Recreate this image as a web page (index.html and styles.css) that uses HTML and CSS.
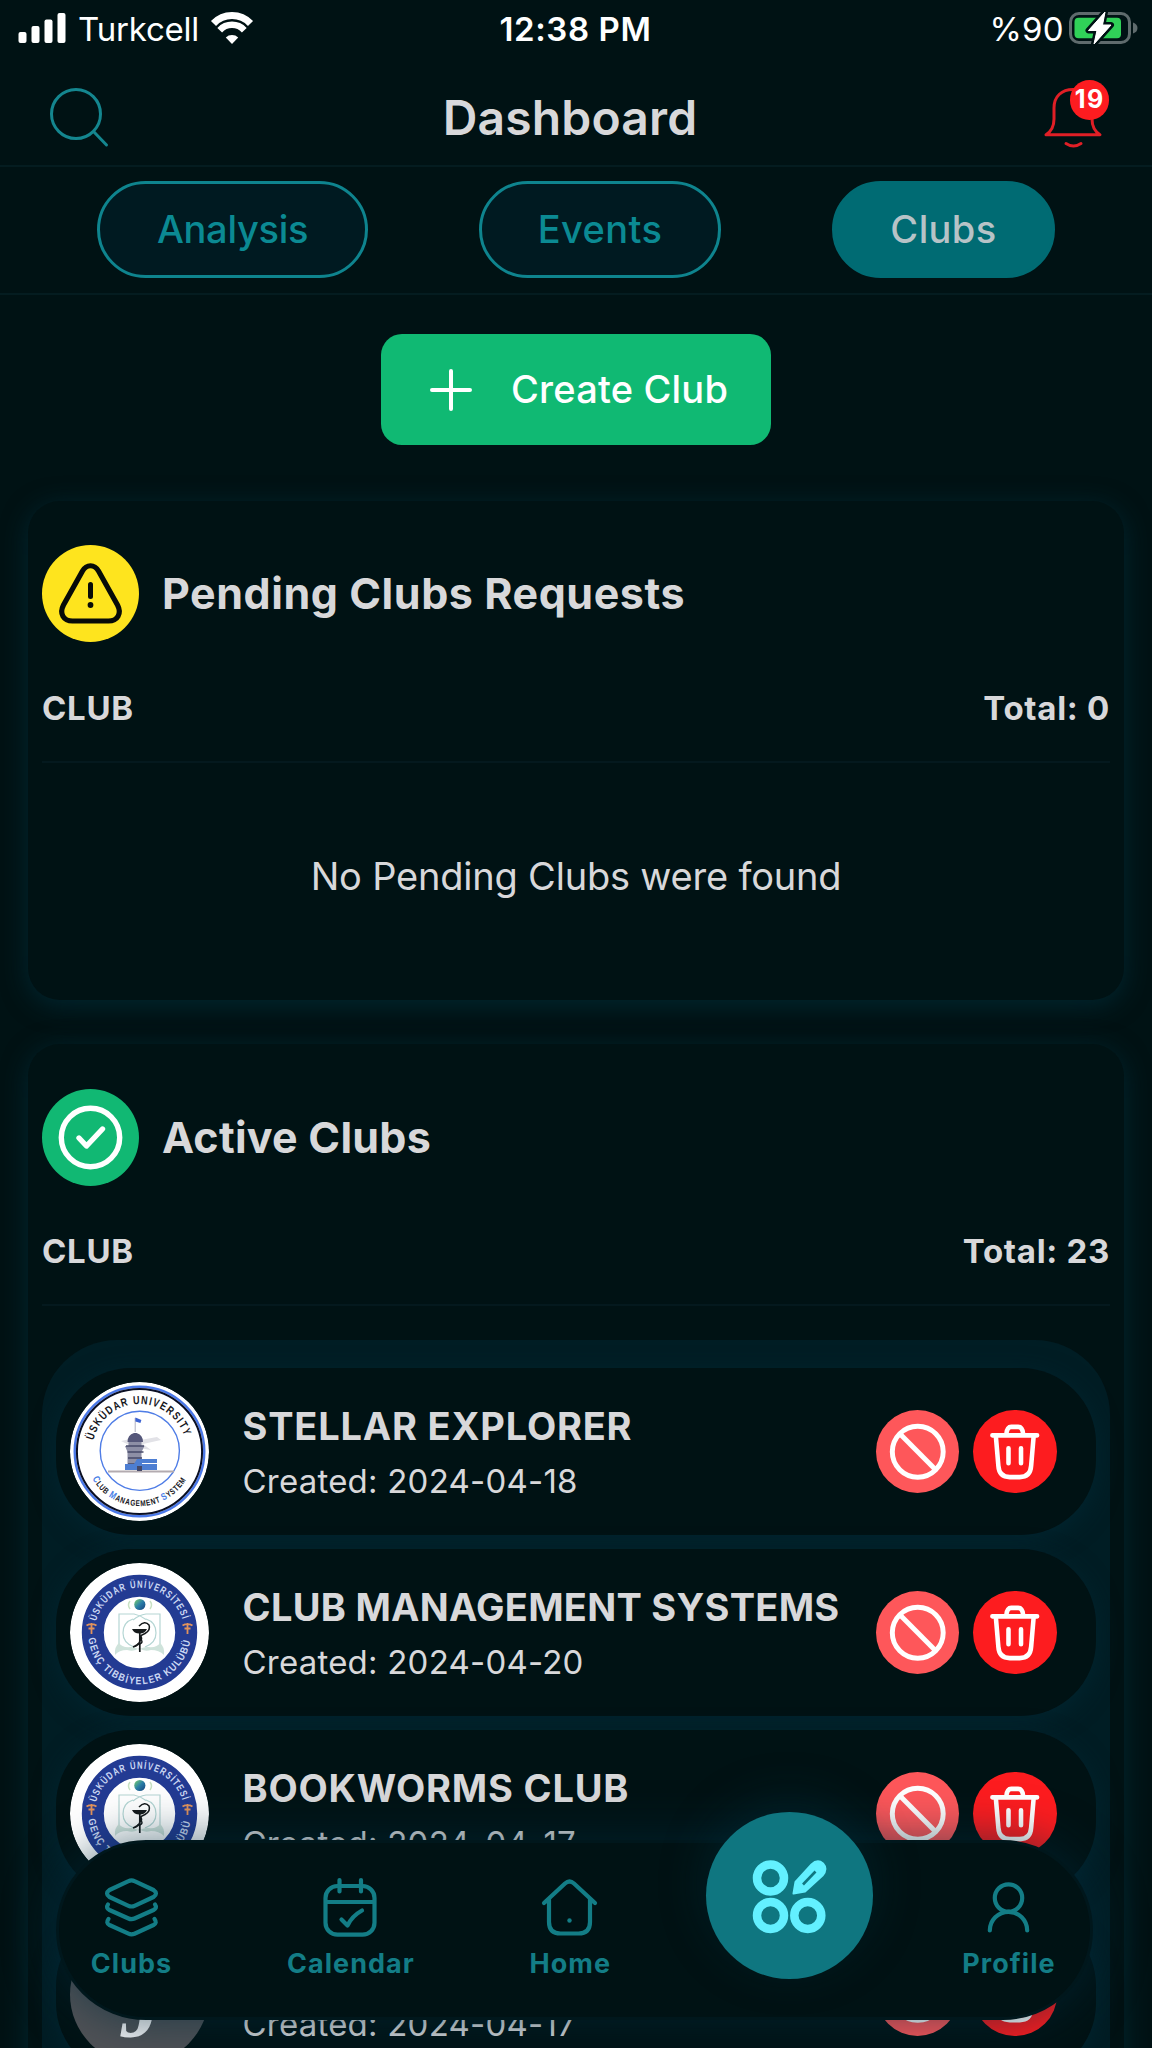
FILE: index.html
```html
<!DOCTYPE html>
<html lang="en">
<head>
<meta charset="utf-8">
<title>Dashboard</title>
<link rel="stylesheet" href="styles.css">
</head>
<body>
<svg class="defs" width="0" height="0" aria-hidden="true">
  <defs>
    <path id="arc-a-top" d="M23.3 58.4A47.5 47.5 0 0 1 114.4 54"/>
    <path id="arc-a-bottom" d="M22.3 96.8A54.5 54.5 0 0 0 116.7 96.8"/>
    <path id="arc-b-top" d="M26.2 58.3A44.7 44.7 0 0 1 112.8 58.3"/>
    <path id="arc-b-bottom" d="M18.3 75.3A51.5 51.5 0 0 0 120.7 75.3"/>
    <linearGradient id="globe" x1="0" y1="0" x2="1" y2="1"><stop offset="0" stop-color="#7fd36b"/><stop offset=".5" stop-color="#2a7fa8"/><stop offset="1" stop-color="#173f7c"/></linearGradient>
    <symbol id="seal-a" viewBox="0 0 139 139">
      <circle cx="69.5" cy="69.5" r="69.5" fill="#fff"/>
      <circle cx="69.5" cy="69.5" r="64.8" fill="none" stroke="#4a78e8" stroke-width="2.4"/>
      <circle cx="69.5" cy="69.5" r="62.6" fill="none" stroke="#0a0f24" stroke-width="2"/>
      <circle cx="69.8" cy="68.8" r="39.6" fill="none" stroke="#4f7de6" stroke-width="1.4"/>
      <g class="seal-a-text">
        <text font-size="11.5" letter-spacing="1.6"><textPath href="#arc-a-top" textLength="123" lengthAdjust="spacingAndGlyphs">ÜSKÜDAR UNIVERSITY</textPath></text>
        <text font-size="8.4" letter-spacing=".9"><textPath href="#arc-a-bottom" textLength="113" lengthAdjust="spacingAndGlyphs"><tspan class="blue" font-size="10">C</tspan>LUB <tspan class="blue" font-size="10">M</tspan>ANAGEMENT <tspan class="blue" font-size="10">S</tspan>YSTEM</textPath></text>
      </g>
      <path d="M51 59l14-3v3l22-4 4 3-18 4 8 6-12-2-10-3z" fill="#e2e2e7"/>
      <path d="M38 88.5h66v2H38z" fill="#b3abb0"/>
      <path d="M65.2 36v14" stroke="#8a8ca5" stroke-width=".7"/>
      <path d="M65.4 35.5l6 2.5-1 3-5-1.500z" fill="#3b62d2"/>
      <path d="M57.500 60q0-7 6.500-9h2.500q6.500 2 6.500 9z" fill="#55577a"/>
      <path d="M58.500 60h13v4h3l-3 6v18h-14v-18l-2.500-6h3.500z" fill="#8d8fa6"/>
      <path d="M56 64h18M57.500 70h16M58 76h14M58 82h13" stroke="#454969" stroke-width="1.400"/>
      <path d="M55 82h9l3-5h20v4H72v1h15v6H55z" fill="#4d7ed2"/>
      <path d="M67 84h5v5h-5z" fill="#454969"/>
    </symbol>
    <symbol id="seal-b" viewBox="0 0 139 139">
      <circle cx="69.5" cy="69.5" r="69.5" fill="#fff"/>
      <circle cx="69.5" cy="69.5" r="46.7" fill="none" stroke="#233b93" stroke-width="22"/>
      <g class="seal-b-text">
        <text font-size="10.4" letter-spacing="1.6"><textPath href="#arc-b-top" textLength="117" lengthAdjust="spacingAndGlyphs">ÜSKÜDAR ÜNİVERSİTESİ</textPath></text>
        <text font-size="10.4" letter-spacing="1.6"><textPath href="#arc-b-bottom" textLength="149" lengthAdjust="spacingAndGlyphs">GENÇ TIBBİYELER KULÜBÜ</textPath></text>
      </g>
      <g fill="none" stroke="#e2935c" stroke-width="1.800">
        <path d="M21.500 60v11M16.500 62.500q5-3 10 0M18.500 65.500h6"/>
        <path d="M117.500 60v11M112.500 62.500q5-3 10 0M114.500 65.500h6"/>
      </g>
      <circle cx="69.800" cy="41.500" r="5.600" fill="url(#globe)"/>
      <path d="M60 38q-3 4 0 8M80 38q3 4 0 8" fill="none" stroke="#c9e2c4" stroke-width="1.500"/>
      <g fill="none" stroke="#b5d6d4" stroke-width="1.200">
        <path d="M49 82V51h15q6 1 12 5.500M90 82V51H76q-7 1-13 6"/>
        <path d="M76 56q10 3 10 14 0 10-11 14M63 56q-10 3-10 14 0 10 11 14"/>
      </g>
      <path d="M49 80q-5 4-4 12 4-5 12-5 8 2 12-2 5 4 12 2 8 0 13 5 1-8-4-12-3 5-12 4-6 0-9 3-3-3-8-3-9 1-12-4z" fill="#cfe3db"/>
      <path d="M69.800 66v23M63 84q6-2 7-6 3-3 0-5" fill="none" stroke="#15191b" stroke-width="1.700"/>
      <path d="M62 66h15q-2 4.500-7.500 4.500T62 66z" fill="#15191b"/>
      <path d="M69 63q6-6 10-1 2 5-4 8.500-8 3-3.500 6.500 2 4-4 4" fill="none" stroke="#15191b" stroke-width="1.500"/>
    </symbol>
    <symbol id="ban" viewBox="-42 -42 84 84">
      <circle r="25.600" fill="none" stroke="#fff" stroke-width="5"/>
      <path d="M-17.500-17.500L17.500 17.500" stroke="#fff" stroke-width="5"/>
    </symbol>
    <symbol id="trash" viewBox="-42 -42 84 84">
      <g fill="none" stroke="#fff" stroke-width="4.600" stroke-linecap="round" stroke-linejoin="round">
        <path d="M-22.500-16.500H22.500M-8.500-17.500C-8-23-6-25-3.500-25H3.500C6-25 8-23 8.500-17.500"/>
        <path d="M-19-15.500L-16.500 14C-16 22-12 25.500-5 25.500H5C12 25.500 16 22 16.500 14L19-15.500M-6.300-3.500V11.500M6.300-3.500V11.500"/>
      </g>
    </symbol>
  </defs>
</svg>

<div class="screen">
  <div class="status">
    <div class="status-left">
      <svg width="50" height="32" viewBox="0 0 50 32" fill="#fff"><rect x=".5" y="20" width="8" height="11" rx="2"/><rect x="13.500" y="14" width="8" height="17" rx="2"/><rect x="26.500" y="7.500" width="8" height="23.500" rx="2"/><rect x="39.500" y="1" width="8" height="30" rx="2"/></svg>
      <span class="carrier">Turkcell</span>
      <svg width="44" height="33" viewBox="0 0 44 33"><g fill="none" stroke="#fff"><path d="M3.500 11.500A25.500 25.500 0 0 1 40.500 11.500" stroke-width="7"/><path d="M9.700 18.200A16.800 16.800 0 0 1 34.300 18.200" stroke-width="6.500"/></g><path d="M15.800 25.500A9 9 0 0 1 28.200 25.500L22 32z" fill="#fff"/></svg>
    </div>
    <span class="clock">12:38 PM</span>
    <div class="status-right">
      <span class="percent">%90</span>
      <svg width="70" height="36" viewBox="0 0 70 36"><rect x="2.500" y="3.500" width="59" height="29" rx="8.500" fill="none" stroke="#5f6b6d" stroke-width="3"/><path d="M65 12.500q4.500 1.500 4.500 5.500t-4.500 5.500z" fill="#5f6b6d"/><rect x="6.500" y="7.700" width="46.500" height="20.500" rx="4" fill="#30d158"/><path d="M37 2L20.500 20.500H29L26 34 43 15H34.500z" fill="#fff" stroke="#001214" stroke-width="6" stroke-linejoin="round" paint-order="stroke"/><path d="M37 2L20.500 20.500H29L26 34 43 15H34.500z" fill="#fff" stroke="#fff" stroke-linejoin="round"/></svg>
    </div>
  </div>

  <header class="header">
    <svg class="search" width="62" height="62" viewBox="0 0 62 62" fill="none" stroke="#14868f" stroke-width="3" stroke-linecap="round"><circle cx="27" cy="28" r="24.500"/><path d="M45 46L57.500 59"/></svg>
    <h1>Dashboard</h1>
    <div class="bell">
      <svg width="70" height="70" viewBox="0 0 70 70" fill="none" stroke="#e01f26" stroke-width="3" stroke-linejoin="round" stroke-linecap="round"><path d="M6 53.700C12 50 14 45 14 38V27C14 15 22 8.500 33 8.500S52 15 52 27V38C52 45 54 50 60 53.700Z"/><path d="M26 62.500Q33.500 67.500 41 62.500"/></svg>
      <span class="badge">19</span>
    </div>
  </header>

  <nav class="tabs">
    <span class="tab analysis">Analysis</span>
    <span class="tab events">Events</span>
    <span class="tab active">Clubs</span>
  </nav>

  <button class="create">
    <svg width="44" height="44" viewBox="0 0 44 44" stroke="#fff" stroke-width="4" stroke-linecap="round"><path d="M3 22H41M22 3V41"/></svg>
    <span>Create Club</span>
  </button>

  <section class="card pending">
    <div class="card-title">
      <span class="mark yellow"><svg width="97" height="97" viewBox="-48.500 -48.500 97 97"><path d="M-8-22.500C-4-29.500 4-29.500 8-22.500L27 11.500C31.500 20 27 27.500 18 27.500H-18C-27 27.500-31.500 20-27 11.500Z" fill="none" stroke="#070b08" stroke-width="5.200"/><path d="M0-9V3" stroke="#070b08" stroke-width="5" stroke-linecap="round"/><circle cy="11.500" r="2.900" fill="#070b08"/></svg></span>
      <h2>Pending Clubs Requests</h2>
    </div>
    <div class="card-head"><span>CLUB</span><span>Total: 0</span></div>
    <p class="empty">No Pending Clubs were found</p>
  </section>

  <section class="card clubs">
    <div class="card-title">
      <span class="mark green"><svg width="97" height="97" viewBox="-48.500 -48.500 97 97" fill="none" stroke="#fff" stroke-width="5.400" stroke-linecap="round" stroke-linejoin="round"><circle r="29.200"/><path d="M-11.500 .500L-4 8.500 12-8.500"/></svg></span>
      <h2 class="short">Active Clubs</h2>
    </div>
    <div class="card-head"><span>CLUB</span><span>Total: 23</span></div>
    <div class="list">
      <div class="row">
        <svg class="avatar"><use href="#seal-a"/></svg>
        <div class="info"><h3>STELLAR EXPLORER</h3><p>Created: 2024-04-18</p></div>
        <span class="action ban"><svg><use href="#ban"/></svg></span>
        <span class="action trash"><svg><use href="#trash"/></svg></span>
      </div>
      <div class="row">
        <svg class="avatar"><use href="#seal-b"/></svg>
        <div class="info"><h3 class="tight">CLUB MANAGEMENT SYSTEMS</h3><p>Created: 2024-04-20</p></div>
        <span class="action ban"><svg><use href="#ban"/></svg></span>
        <span class="action trash"><svg><use href="#trash"/></svg></span>
      </div>
      <div class="row">
        <svg class="avatar"><use href="#seal-b"/></svg>
        <div class="info"><h3>BOOKWORMS CLUB</h3><p>Created: 2024-04-17</p></div>
        <span class="action ban"><svg><use href="#ban"/></svg></span>
        <span class="action trash"><svg><use href="#trash"/></svg></span>
      </div>
      <div class="row">
        <span class="avatar letter">J</span>
        <div class="info"><h3></h3><p>Created: 2024-04-17</p></div>
        <span class="action ban"><svg><use href="#ban"/></svg></span>
        <span class="action trash"><svg><use href="#trash"/></svg></span>
      </div>
    </div>
  </section>

  <nav class="dock">
    <div class="dock-item"><svg width="57" height="62" viewBox="0 0 57 62"><path d="M25.500 5.200Q28.500 3.600 31.500 5.200L50.500 14Q55.500 17.500 50.500 21L31.500 29.800Q28.500 31.200 25.500 29.800L6.500 21Q1.500 17.500 6.500 14ZM5 28.500Q2.500 32 6.500 34L25.500 42.500Q28.500 43.800 31.500 42.500L50.500 34Q54.500 32 52 28.500M5.500 43Q2.500 47 6.500 49L25.500 57.700Q28.500 59 31.500 57.700L50.500 49Q54.500 47 51.500 43"/></svg><span>Clubs</span></div>
    <div class="dock-item"><svg width="58" height="62" viewBox="0 0 58 62"><rect x="4.500" y="10" width="49" height="48.700" rx="12"/><path d="M18.500 4V15.500M40 4V15.500M5 26H53M20.500 43.500L26.500 49.500Q31 40 41 34.500"/></svg><span>Calendar</span></div>
    <div class="dock-item"><svg width="57" height="62" viewBox="0 0 57 62"><path d="M3 27L24 7.500Q28.500 3.500 33 7.500L54 27M8 23V46Q8 57.500 19.500 57.500H37.500Q49 57.500 49 46V23"/><circle class="dot" cx="28.500" cy="44.500" r="2.200"/></svg><span>Home</span></div>
    <div class="dock-item"></div>
    <div class="dock-item"><svg width="57" height="62" viewBox="0 0 57 62"><circle cx="28.500" cy="22" r="13.700"/><path d="M9.800 54.500A18.700 18.700 0 0 1 47.200 54.500"/></svg><span>Profile</span></div>
    <div class="fab"><svg width="76" height="76" viewBox="0 0 76 76"><g fill="none" stroke="#63f0ff" stroke-width="8.500"><circle cx="19.500" cy="20" r="13.500"/><circle cx="19.500" cy="57.500" r="13.500"/><circle cx="56.800" cy="57.500" r="13.500"/></g><path d="M42.500 35.500L44.500 24 60.500 6.500Q66.500 .8 72 5.500 77 11 71.500 17.500L54 33.500Z" fill="#63f0ff" stroke="#63f0ff" stroke-width="2" stroke-linejoin="round"/><path d="M52 26.500L64.500 13.500" stroke="#0f7680" stroke-width="2.600"/></svg></div>
  </nav>
</div>
</body>
</html>
```
FILE: styles.css
```css
* { box-sizing: border-box; }
body { margin: 0; background: #001214; font-family: Inter, "Liberation Sans", sans-serif; }
h1, h2, h3, p { margin: 0; }
.defs { position: absolute; }
.screen { position: relative; width: 1152px; height: 2048px; overflow: hidden; background: #001214; color: #d8d8da; }

.status { height: 58px; display: grid; grid-template-columns: 1fr auto 1fr; align-items: center; padding: 0 14px 0 18px; color: #fff; font-size: 33px; line-height: 40px; }
.status-left, .status-right { display: flex; align-items: center; }
.status-left svg { margin-top: -2px; }
.carrier { margin: 0 11px 0 10px; letter-spacing: -.2px; }
.status-right { justify-content: flex-end; gap: 4px; }
.status-right svg { margin-top: -2px; }
.percent { letter-spacing: .3px; }
.clock { font-weight: 600; letter-spacing: .6px; margin: 0 5px 0 0; }

.header { height: 109px; padding: 0 42px 0 48px; display: grid; grid-template-columns: 1fr auto 1fr; align-items: center; border-bottom: 2px solid #041c20; }
.header h1 { font-size: 48px; line-height: 60px; font-weight: 600; letter-spacing: .15px; margin: 13px 18px 0 0; }
.search { margin: 11px 0 0 1px; }
.bell { position: relative; justify-self: end; height: 70px; margin-top: 8px; }
.badge { position: absolute; left: 29.500px; top: -.5px; width: 39.500px; height: 39.500px; border-radius: 50%; background: #fd1c20; color: #fff; font-weight: 700; font-size: 25px; line-height: 38px; letter-spacing: 1.500px; text-indent: 1px; text-align: center; }

.tabs { height: 128px; padding: 14px 97px; display: flex; justify-content: space-between; align-items: flex-start; border-bottom: 2px solid #041c20; }
.tab { height: 97px; width: 241.500px; border: 3px solid #0e848e; border-radius: 49px; background: #001a21; color: #0b8a93; font-size: 38px; font-weight: 500; line-height: 91px; text-align: center; letter-spacing: .4px; }
.analysis { width: 271px; letter-spacing: -.3px; }
.active { width: 223px; background: #006b73; border-color: #006b73; color: #b7c3c7; }

.create { width: 390px; height: 111px; margin: 39px auto 0; padding: 0 0 0 48px; display: flex; align-items: center; gap: 38px; border: 0; border-radius: 21px; background: #10b973; color: #fff; font: 500 38px/50px Inter, sans-serif; letter-spacing: .2px; }
.create span { margin-top: -2px; }

.card { margin: 56px 28px 0; border-radius: 32px; padding: 44px 14px 0; background: #001214; box-shadow: 0 5px 26px rgba(0, 47, 60, .7); }
.pending { height: 499px; }
.clubs { margin-top: 44px; padding-top: 45px; height: 1400px; }
.card-title { display: flex; align-items: center; gap: 23px; height: 97px; }
.mark { width: 97px; height: 97px; border-radius: 50%; }
.mark svg { display: block; }
.yellow { background: #fee41e; }
.green { background: #11b873; }
h2 { font-size: 43px; line-height: 60px; font-weight: 700; letter-spacing: .56px; margin-top: -2px; }
h2.short { letter-spacing: .25px; }
.card-head { display: flex; justify-content: space-between; height: 121px; padding-top: 46px; font-size: 33px; line-height: 40px; font-weight: 700; letter-spacing: .7px; border-bottom: 2px solid #04191e; }
.clubs .card-head { height: 120px; padding-top: 45px; }
.empty { font-size: 38px; line-height: 50px; letter-spacing: -.2px; padding-top: 88px; text-align: center; }

.list { margin-top: 34px; height: 1000px; padding: 28px 14px 0; border-radius: 75px 75px 0 0; background: #001d24; display: flex; flex-direction: column; gap: 14.500px; }
.row { flex: none; height: 166.500px; display: flex; align-items: center; padding: 0 39.500px 0 14px; border-radius: 75px; background: #001214; box-shadow: 0 6px 24px rgba(0, 41, 54, .65); }
.avatar { width: 139px; height: 139px; border-radius: 50%; flex: none; display: block; }
.letter { background: #505256; color: #f4f4f6; font: italic bold 84px/139px "Liberation Serif", serif; text-align: center; text-indent: 4px; padding-top: 14px; }
.info { flex: 1; margin-left: 33.500px; padding-top: 3.500px; white-space: nowrap; }
h3 { height: 56px; font-size: 38px; line-height: 56px; font-weight: 700; letter-spacing: .8px; }
h3.tight { letter-spacing: .27px; }
.info p { font-size: 33px; line-height: 54px; letter-spacing: .22px; }
.action { width: 83.500px; height: 83.500px; border-radius: 50%; flex: none; }
.action svg { display: block; width: 83.500px; height: 83.500px; }
.ban { background: #fe575a; margin-right: 13.800px; }
.trash { background: #fd1c1f; }

.seal-a-text { font-family: "Liberation Sans", sans-serif; font-weight: 700; fill: #15161c; }
.seal-a-text .blue { fill: #4a7ee6; }
.seal-b-text { font-family: "Liberation Sans", sans-serif; font-weight: 700; fill: #ccd8f3; }

.dock { position: absolute; left: 56px; top: 1840px; width: 1036.500px; height: 179.500px; border: 3px solid #00171c; border-radius: 90px; background: #001214; display: flex; justify-content: space-between; padding-right: 9px; box-shadow: 0 0 50px rgba(0, 44, 62, .62); }
.dock-item { width: 144px; padding-top: 33px; display: flex; flex-direction: column; align-items: center; color: #137d86; font-size: 27px; font-weight: 700; letter-spacing: 1.050px; }
.dock-item svg { fill: none; stroke: #137d86; stroke-width: 4.200; stroke-linecap: round; stroke-linejoin: round; }
.dock-item .dot { fill: #137d86; stroke: none; }
.dock-item span { line-height: 34px; margin: 9px 0 0 1px; }
.fab { position: absolute; left: 647px; top: -31px; width: 167px; height: 167px; border-radius: 50%; background: #0f7680; display: flex; align-items: center; justify-content: center; box-shadow: 0 -12px 46px rgba(0, 50, 66, .4); }
.fab svg { margin-left: -1px; }
```
